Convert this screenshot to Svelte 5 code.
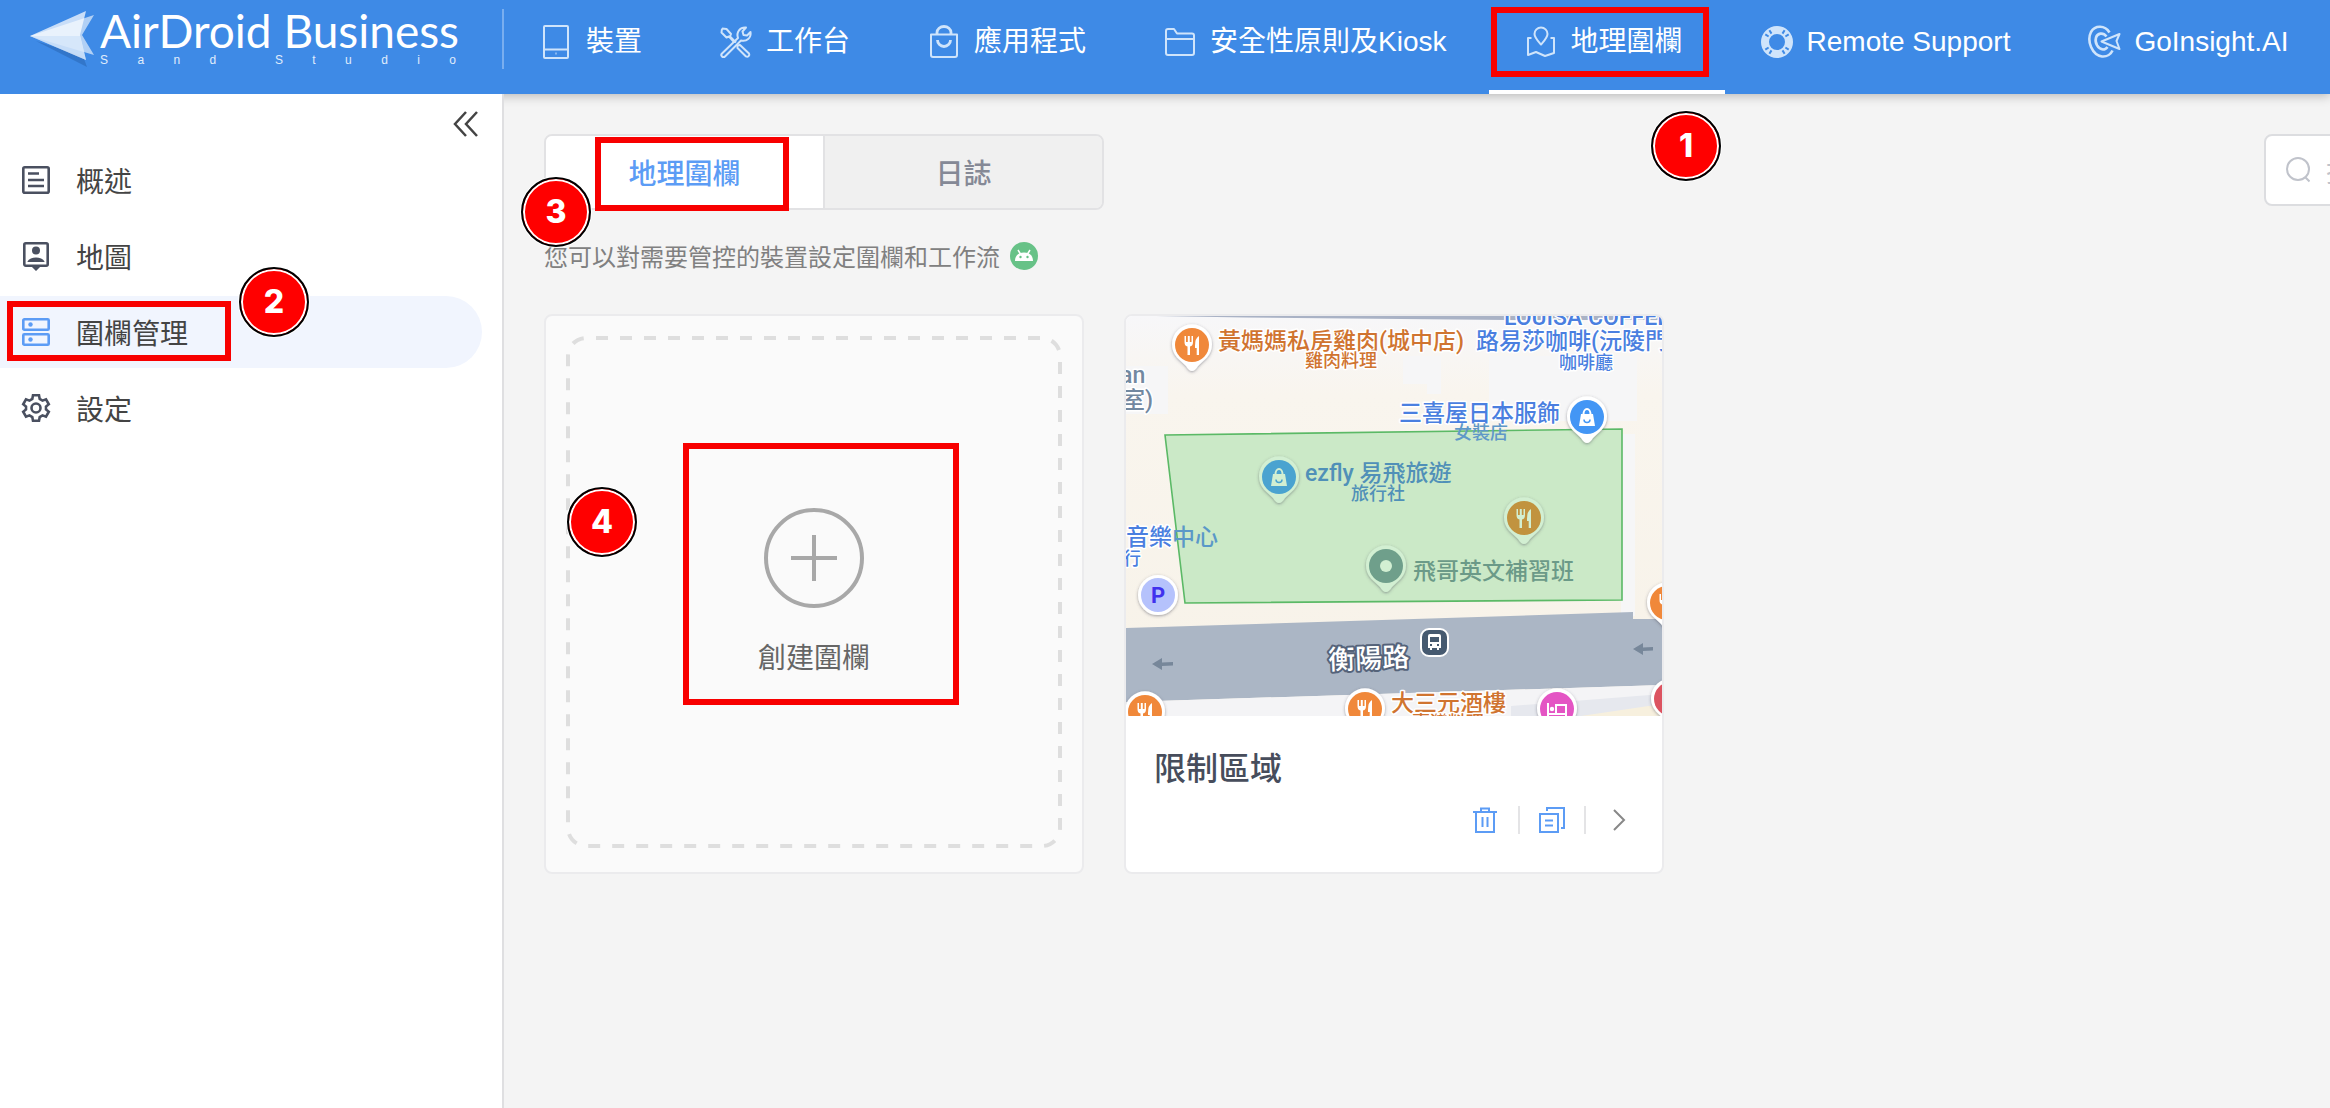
<script lang="ts">
  const navItems = [
    { id: 'devices', label: '裝置' },
    { id: 'workbench', label: '工作台' },
    { id: 'apps', label: '應用程式' },
    { id: 'policy', label: '安全性原則及Kiosk' },
    { id: 'geofence', label: '地理圍欄' },
    { id: 'support', label: 'Remote Support' },
    { id: 'goinsight', label: 'GoInsight.AI' },
  ];

  const sideItems = [
    { id: 'overview', label: '概述' },
    { id: 'map', label: '地圖' },
    { id: 'fences', label: '圍欄管理' },
    { id: 'settings', label: '設定' },
  ];

  const tabs = [
    { id: 'fences', label: '地理圍欄' },
    { id: 'logs', label: '日誌' },
  ];

  // Guide overlay: frames and step numbers that float over the page.
  const frames = [
    { x: 1491, y: 7, w: 218, h: 70 },
    { x: 7, y: 301, w: 224, h: 60 },
    { x: 595, y: 137, w: 194, h: 74 },
    { x: 683, y: 443, w: 276, h: 262 },
  ];
  const steps = [
    { n: 1, x: 1651, y: 111 },
    { n: 2, x: 239, y: 267 },
    { n: 3, x: 521, y: 177 },
    { n: 4, x: 567, y: 487 },
  ];

  // Map pins; x/y is the centre of the round head.
  const pins = [
    { x: 66, y: 29, kind: 'food', fill: '#f0883a', ring: '#fff' },
    { x: 461, y: 101, kind: 'bag', fill: '#4396f5', ring: '#fff' },
    { x: 153, y: 161, kind: 'bag', fill: '#4aa3d0', ring: '#d2efd2' },
    { x: 398, y: 202, kind: 'food', fill: '#c1933f', ring: '#d2efd2' },
    { x: 260, y: 250, kind: 'dot', fill: '#6f9f8b', ring: '#d2efd2' },
    { x: 541, y: 287, kind: 'food', fill: '#f0883a', ring: '#fff' },
    { x: 19, y: 396, kind: 'food', fill: '#f0883a', ring: '#fff' },
    { x: 239, y: 393, kind: 'food', fill: '#f0883a', ring: '#fff' },
    { x: 431, y: 393, kind: 'bed', fill: '#e455c4', ring: '#fff' },
    { x: 545, y: 383, kind: 'dot', fill: '#dc5360', ring: '#fff' },
  ];

  const ORANGE = '#d07430';
  const BLUE = '#4a7fe0';
  const labels = [
    { x: 92, y: 33, size: 23, fill: ORANGE, text: '黃媽媽私房雞肉(城中店)' },
    { x: 179, y: 51, size: 18, fill: ORANGE, text: '雞肉料理' },
    { x: 378, y: 9, size: 23, fill: BLUE, text: 'LOUISA COFFEE' },
    { x: 350, y: 33, size: 23, fill: BLUE, text: '路易莎咖啡(沅陵門市)' },
    { x: 433, y: 53, size: 18, fill: BLUE, text: '咖啡廳' },
    { x: -6, y: 67, size: 23, fill: '#7288a0', text: 'an' },
    { x: -4, y: 92, size: 23, fill: '#7288a0', text: '室)' },
    { x: 273, y: 105, size: 23, fill: BLUE, text: '三喜屋日本服飾' },
    { x: 0, y: 229, size: 23, fill: BLUE, text: '音樂' },
    { x: -3, y: 249, size: 18, fill: BLUE, text: '行' },
    { x: 265, y: 395, size: 23, fill: ORANGE, text: '大三元酒樓' },
    { x: 286, y: 413, size: 18, fill: ORANGE, text: '臺灣料理' },
  ];
  const tintedLabels = [
    { x: 328, y: 123, size: 18, fill: '#5f98c8', text: '女裝店' },
    { x: 179, y: 165, size: 23, fill: '#5090b8', text: 'ezfly 易飛旅遊' },
    { x: 225, y: 184, size: 18, fill: '#5090b8', text: '旅行社' },
    { x: 287, y: 263, size: 23, fill: '#6b9a88', text: '飛哥英文補習班' },
    { x: 46, y: 229, size: 23, fill: '#5a98c8', text: '中心' },
  ];

  let activeNav = $state('geofence');
  let activeSide = $state('fences');
  let activeTab = $state('fences');
  let keyword = $state('');
</script>

{#snippet navIcon(id: string)}
  <svg class="nav-icon" viewBox="0 0 32 32" aria-hidden="true">
    {#if id === 'devices'}
      <rect x="4" y="0" width="24" height="32" rx="1" />
      <path d="M4 23.500H28M15.500 27.500H16.500" />
    {:else if id === 'workbench'}
      <path d="M2 2.500L6.500 3L11 8L10 10.500L16 16.500M2 2.500L1.500 6.500L6.500 11.500L9 10.500L14.500 16.500M17.500 19.500L20 19L29 27.500A2.200 2.200 0 0 1 26 30.500L17.500 22Z" />
      <path d="M2 27.500L18 12C16 6 20 1 26 1.500L22.500 5.500L23.500 9L27 9.500L30.500 6C31.500 12 26.500 16 21 14.500L5 30.500A2.100 2.100 0 0 1 2 27.500Z" />
    {:else if id === 'apps'}
      <path d="M3 8.500H29V29A2 2 0 0 1 27 31H5A2 2 0 0 1 3 29Z" />
      <path d="M9 8V6.500A7 6 0 0 1 23 6.500V8M9.500 14A6.500 6.500 0 0 0 22.500 14" stroke-width="2.800" />
    {:else if id === 'policy'}
      <path d="M2 5A2 2 0 0 1 4 3H10L13 7.500H28A2 2 0 0 1 30 9.500V27A2 2 0 0 1 28 29H4A2 2 0 0 1 2 27ZM2 13H30" />
    {:else if id === 'geofence'}
      <path d="M16 18.500C12.500 14.500 9.500 11.500 9.500 8A6.500 6.500 0 0 1 22.500 8C22.500 11.500 19.500 14.500 16 18.500Z" />
      <path d="M6.500 12H3V29L11 26L20 30L29 27V12H25.500" />
    {:else if id === 'support'}
      <circle cx="16" cy="16" r="12" stroke-width="8" />
      <path
        class="cut"
        d="M21.500 7.600L23.600 4.300M24.400 10.500L27.700 8.400M24.400 21.500L27.700 23.600M21.500 24.400L23.600 27.700M10.500 24.400L8.400 27.700M7.600 21.500L4.300 23.600M7.600 10.500L4.300 8.400M10.500 7.600L8.400 4.300"
      />
    {:else}
      <path d="M21.500 6.500C17 -1 7 -1 3 6C-1.500 15 4 29 14 30.500C19 31 23 28 24.500 24.500" stroke-width="2.600" />
      <path d="M18.500 10.500C15 6 9.500 7 8 11.500C6.500 17 10 23 15 23.500C17 23.500 18.500 22.500 19.500 21" stroke-width="2.600" />
      <path d="M13.500 15.500L31.500 8L28.500 15L31.500 23Z" />
    {/if}
  </svg>
{/snippet}

{#snippet sideIcon(id: string)}
  <svg class="side-icon" viewBox="0 0 28 28" aria-hidden="true">
    {#if id === 'overview'}
      <rect x="1.300" y="1.300" width="25.400" height="25.400" rx="1.500" />
      <path d="M6 7.500H17M6 14H22M6 20H22" />
    {:else if id === 'map'}
      <rect x="2.300" y="1.300" width="23.400" height="22.400" rx="1.500" />
      <circle cx="14" cy="8.500" r="4" class="solid" />
      <path d="M5.500 19.500C8 14 20 14 22.500 19.500V20H5.500ZM9.500 24.500H18.500L14 29Z" class="solid" />
    {:else if id === 'fences'}
      <rect x="1.300" y="1.300" width="25.400" height="10.400" rx="1" />
      <rect x="1.300" y="16.300" width="25.400" height="10.400" rx="1" />
      <circle cx="8.500" cy="6.500" r="2.200" class="solid" />
      <circle cx="8.500" cy="21.500" r="2.200" class="solid" />
    {:else}
      <path d="M11 1.300H17L17.700 5L20.500 6.600L24 5.300L26.800 10.300L24 12.600V15.400L26.800 17.700L24 22.700L20.500 21.400L17.700 23L17 26.700H11L10.300 23L7.500 21.400L4 22.700L1.200 17.700L4 15.400V12.600L1.200 10.300L4 5.300L7.500 6.600L10.300 5Z" />
      <circle cx="14" cy="14" r="4.500" />
    {/if}
  </svg>
{/snippet}

<div class="app">
  <header class="topbar">
    <a class="logo" href="#home">
      <svg class="logo-mark" viewBox="0 0 64 58" aria-hidden="true">
        <path d="M6 31L57 57L53 46Z" fill="#2b69b8" opacity=".6" />
        <path d="M0 26L64 5L52 25L64 45Z" fill="#fff" opacity=".6" />
        <path d="M0 26L56 1L50 25L56 50Z" fill="#fff" opacity=".72" />
        <path d="M0 26H50L56 50Z" fill="#c4dcf7" opacity=".5" />
      </svg>
      <span class="logo-text">
        <span class="brand">AirDroid Business</span>
        <span class="studio">
          {#each 'Sand Studio' as letter}<span>{letter}</span>{/each}
        </span>
      </span>
    </a>
    <nav class="nav">
      {#each navItems as item}
        <a
          href="#{item.id}"
          class="nav-item"
          class:active={activeNav === item.id}
          onclick={() => (activeNav = item.id)}
        >
          {@render navIcon(item.id)}
          {item.label}
        </a>
      {/each}
    </nav>
  </header>

  <div class="body">
    <aside class="sidebar">
      <button class="collapse" aria-label="收合">
        <svg viewBox="0 0 26 26" aria-hidden="true"><path d="M13 1L2 13L13 25M24 1L13 13L24 25" /></svg>
      </button>
      {#each sideItems as item}
        <a
          href="#{item.id}"
          class="side-item"
          class:active={activeSide === item.id}
          onclick={() => (activeSide = item.id)}
        >
          {@render sideIcon(item.id)}
          {item.label}
        </a>
      {/each}
    </aside>

    <main class="content">
      <div class="toolbar">
        <div class="tabs" role="tablist">
          {#each tabs as tab}
            <button
              role="tab"
              class="tab"
              class:active={activeTab === tab.id}
              aria-selected={activeTab === tab.id}
              onclick={() => (activeTab = tab.id)}
            >{tab.label}</button>
          {/each}
        </div>
        <label class="search">
          <svg viewBox="0 0 24 26" aria-hidden="true"><circle cx="12" cy="12" r="11" /><path d="M19 20L23.500 24.500" /></svg>
          <input type="text" placeholder="搜尋" aria-label="搜尋" bind:value={keyword} />
        </label>
      </div>

      <p class="hint">
        您可以對需要管控的裝置設定圍欄和工作流
        <svg viewBox="0 0 28 28" aria-hidden="true">
          <circle cx="14" cy="14" r="14" fill="#67c287" />
          <path d="M5 19C5 13 9 10.500 14 10.500S23 13 23 19Z" fill="#fff" />
          <path d="M8 8L10.500 12M20 8L17.500 12" stroke="#fff" stroke-width="1.500" />
          <circle cx="10.500" cy="15" r="1.200" fill="#67c287" />
          <circle cx="17.500" cy="15" r="1.200" fill="#67c287" />
        </svg>
      </p>

      <div class="cards">
        <button class="card create">
          <svg class="dashes" aria-hidden="true"><rect x="2" y="2" rx="18" /></svg>
          <span class="create-body">
            <svg class="plus" viewBox="0 0 100 100" aria-hidden="true">
              <circle cx="50" cy="50" r="48" />
              <path d="M50 27V73M27 50H73" />
            </svg>
            創建圍欄
          </span>
        </button>

        <article class="card fence">
          <svg class="map" viewBox="0 0 536 400" role="img" aria-label="限制區域">
            <defs>
              <linearGradient id="ground" x1="0" y1="0" x2="0" y2="1">
                <stop offset="0" stop-color="#f7f7f9" />
                <stop offset=".2" stop-color="#f9f5ee" />
                <stop offset="1" stop-color="#f7f2e8" />
              </linearGradient>
              <filter id="pinShadow" x="-20%" y="-20%" width="140%" height="150%">
                <feDropShadow dx="0" dy="1" stdDeviation="1.500" flood-color="#445" flood-opacity=".5" />
              </filter>
            </defs>
            <rect width="536" height="400" fill="url(#ground)" />
            <path d="M0 50H42V98H0ZM277 40H315V78H301V68H277ZM363 40H511V105H363ZM495 118H509V300H495Z" fill="#f6f6f7" />
            <path d="M30 0H536V4H380L120 1.500Z" fill="#a9b2c5" />
            <path d="M0 312L507 296V303H536V369L0 386Z" fill="#abb6c5" />
            <path d="M0 386L536 369V400H0Z" fill="#f4f4f6" />
            <path d="M385 390L536 378V400H385Z" fill="#e6e8ee" />
            <path d="M455 400L536 388V400Z" fill="#f7f0de" />
            <path d="M26 348L36 342V346.500L47 346V349.500L36 350V354ZM507 333L517 327V331.500L527 331V334.500L517 335V339Z" fill="#77879a" />

            {#each labels as l}
              <text x={l.x} y={l.y} font-size={l.size} fill={l.fill} class="halo">{l.text}</text>
            {/each}

            <path d="M39 119L496 113V284L59 287Z" fill="#c9e8c5" fill-opacity=".96" stroke="#5bb966" stroke-width="1.600" />

            {#each tintedLabels as l}
              <text x={l.x} y={l.y} font-size={l.size} fill={l.fill}>{l.text}</text>
            {/each}

            <text x="202" y="352" font-size="27" class="road" transform="rotate(-2 243 341)">衡陽路</text>
            <rect x="295" y="313" width="27" height="27" rx="8" fill="#465a70" stroke="#fff" stroke-width="2" />
            <path d="M302 320Q302 318 304 318H313Q315 318 315 320V332H313V334H311V332H306V334H304V332H302Z" fill="#fff" />
            <path d="M304 321H313V326H304ZM304 328H306V330H304ZM311 328H313V330H311Z" fill="#465a70" />

            <circle cx="32" cy="279" r="18.500" fill="#b5c2fc" stroke="#fff" stroke-width="3" filter="url(#pinShadow)" />
            <text x="25" y="287" font-size="22" class="parking">P</text>

            {#each pins as p}
              <g transform="translate({p.x} {p.y})">
                <path d="M0 26Q-3 26 -6 21L-15 12.500A20 20 0 1 1 15 12.500L6 21Q3 26 0 26Z" fill={p.ring} filter="url(#pinShadow)" />
                <circle r="17" fill={p.fill} />
                {#if p.kind === 'food'}
                  <path d="M-7.500 -9V-3Q-7.500 1 -4.500 1.500V10H-2V1.500Q1 1 1 -3V-9H-.500V-3H-2.200V-9H-4.200V-3H-6V-9ZM7 -9Q3 -7 3 1V3H4.700V10H7Z" fill={p.ring} />
                {:else if p.kind === 'bag'}
                  <path d="M-6 -3H6L8 9H-8Z" fill={p.ring} />
                  <path d="M-3.500 -3A3.500 5 0 0 1 3.500 -3" fill="none" stroke={p.ring} stroke-width="2" />
                  <path d="M-3 2.500A3 3 0 0 0 3 2.500" fill="none" stroke={p.fill} stroke-width="1.500" />
                {:else if p.kind === 'bed'}
                  <path d="M-9 -6V9M-9 5H9M9 9V-4H-1V5" fill="none" stroke="#fff" stroke-width="2" />
                  <circle cx="-5" cy="0" r="2.200" fill="#fff" />
                {:else}
                  <circle r="6" fill={p.ring} />
                {/if}
              </g>
            {/each}
          </svg>

          <h2 class="fence-name">限制區域</h2>
          <div class="actions">
            <button aria-label="刪除">
              <svg viewBox="0 0 26 26" aria-hidden="true"><path d="M1 5H25M9 5V1.500H17V5M4 5V25H22V5M10.500 10V20M15.500 10V20" /></svg>
            </button>
            <button aria-label="複製">
              <svg viewBox="0 0 26 26" aria-hidden="true"><path d="M1 7H19V25H1ZM8 4V1H25V21H22M6 13.500H14M6 18.500H14" /></svg>
            </button>
            <button class="more" aria-label="詳情">
              <svg viewBox="0 0 26 26" aria-hidden="true"><path d="M9 3L19 13L9 23" /></svg>
            </button>
          </div>
        </article>
      </div>
    </main>
  </div>

  <div class="guide">
    {#each frames as f}
      <div class="frame" style="left: {f.x}px; top: {f.y}px; width: {f.w}px; height: {f.h}px"></div>
    {/each}
    {#each steps as s}
      <span class="step" style="left: {s.x}px; top: {s.y}px">{s.n}</span>
    {/each}
  </div>
</div>

<style>
  :global(body) {
    margin: 0;
    background: #f4f4f4;
  }
  .app {
    position: relative;
    display: flex;
    flex-direction: column;
    min-height: 100vh;
    overflow: hidden;
    font-family: 'Noto Sans CJK TC', sans-serif;
    font-size: 28px;
    line-height: 40px;
    color: #444;
  }
  .app *,
  .app {
    box-sizing: border-box;
  }
  a {
    color: inherit;
    text-decoration: none;
  }
  button {
    padding: 0;
    border: 0;
    background: none;
    font: inherit;
    color: inherit;
    cursor: pointer;
  }
  svg {
    display: block;
    flex: none;
  }

  /* top bar */
  .topbar {
    position: relative;
    z-index: 1;
    display: flex;
    height: 94px;
    background: #3e8ae6;
    color: #fff;
    box-shadow: 0 2px 10px rgba(0, 0, 0, 0.25);
    font-family: 'Liberation Sans', 'Noto Sans CJK TC', sans-serif;
  }
  .logo {
    display: flex;
    align-items: flex-start;
    gap: 6px;
    width: 504px;
    height: 60px;
    margin-top: 9px;
    padding-left: 30px;
    border-right: 2px solid #79aeef;
    flex: none;
  }
  .logo-mark {
    width: 64px;
    height: 58px;
    margin-top: 1px;
  }
  .logo-text {
    display: flex;
    flex-direction: column;
    width: 356px;
  }
  .brand {
    font-family: Lato, sans-serif;
    font-size: 46px;
    line-height: 44px;
    white-space: nowrap;
  }
  .studio {
    display: flex;
    justify-content: space-between;
    font-size: 12px;
    line-height: 14px;
    color: #e0edfc;
  }
  .nav {
    display: flex;
  }
  .nav-item {
    display: flex;
    align-items: center;
    gap: 14px;
    padding: 0 42px 10px 36px;
    white-space: nowrap;
  }
  .nav-item.active {
    box-shadow: inset 0 -4px #fff;
  }
  .nav-icon {
    width: 32px;
    height: 32px;
    fill: none;
    stroke: #cfe4fb;
    stroke-width: 2;
    stroke-linejoin: round;
    overflow: visible;
  }
  .nav-icon .cut {
    stroke: #3e8ae6;
  }

  /* sidebar */
  .body {
    display: flex;
    flex: 1;
  }
  .sidebar {
    position: relative;
    z-index: 2;
    display: flex;
    flex-direction: column;
    gap: 4px;
    width: 504px;
    padding: 16px 20px 0 0;
    border-right: 2px solid #dfdfe1;
    background: #fff;
    flex: none;
  }
  .collapse {
    align-self: flex-end;
    width: 26px;
    height: 26px;
    margin: 1px 3px 3px 0;
  }
  .collapse svg {
    fill: none;
    stroke: #444;
    stroke-width: 2.5;
  }
  .side-item {
    display: flex;
    align-items: center;
    gap: 26px;
    height: 72px;
    padding-left: 22px;
    border-radius: 0 36px 36px 0;
  }
  .side-item.active {
    background: #f1f5fe;
  }
  .side-icon {
    width: 28px;
    height: 28px;
    fill: none;
    stroke: #4a5060;
    stroke-width: 2.6;
    overflow: visible;
  }
  .side-icon .solid {
    fill: #4a5060;
    stroke: none;
  }
  .side-item.active .side-icon {
    stroke: #5c9cf5;
  }
  .side-item.active .solid {
    fill: #5c9cf5;
  }

  /* content */
  .content {
    flex: 1;
    min-width: 0;
    padding: 40px;
  }
  .toolbar {
    display: flex;
    justify-content: space-between;
    align-items: flex-start;
    /* the search box runs past the right edge of the viewport */
    margin-right: -274px;
  }
  .tabs {
    display: flex;
    width: 560px;
    height: 76px;
    border: 2px solid #e2e2e4;
    border-radius: 8px;
    overflow: hidden;
  }
  .tab {
    flex: 1;
    background: #f0f0f0;
    color: #858996;
    font-weight: 500;
  }
  .tab + .tab {
    border-left: 2px solid #e2e2e4;
  }
  .tab.active {
    background: #fff;
    color: #5c9cf5;
  }
  .search {
    display: flex;
    align-items: center;
    gap: 16px;
    width: 300px;
    height: 72px;
    padding: 0 20px;
    border: 2px solid #dcdde0;
    border-radius: 8px;
    background: #fff;
  }
  .search svg {
    width: 24px;
    height: 26px;
    fill: none;
    stroke: #c0c3cb;
    stroke-width: 2;
  }
  .search input {
    width: 100%;
    padding: 0;
    border: 0;
    outline: 0;
    background: none;
    font: inherit;
  }
  .search input::placeholder {
    color: #c0c3cb;
  }
  .hint {
    display: flex;
    align-items: center;
    gap: 10px;
    margin: 28px 0;
    font-size: 24px;
    line-height: 36px;
    color: #808080;
  }
  .hint svg {
    width: 28px;
    height: 28px;
  }
  .cards {
    display: grid;
    grid-template-columns: repeat(auto-fill, 540px);
    gap: 40px;
    margin-top: 40px;
  }
  .card {
    border: 2px solid #ebebed;
    border-radius: 8px;
    background: #fff;
    overflow: hidden;
  }
  .create {
    display: grid;
    padding: 20px 20px 24px;
    background: #fafafa;
    color: #666;
  }
  .dashes,
  .create-body {
    grid-area: 1 / 1;
  }
  .dashes {
    width: 100%;
    height: 100%;
  }
  .dashes rect {
    width: calc(100% - 4px);
    height: calc(100% - 4px);
    fill: none;
    stroke: #dedede;
    stroke-width: 4;
    stroke-dasharray: 12 12;
    stroke-dashoffset: -10;
  }
  .create-body {
    display: flex;
    flex-direction: column;
    align-items: center;
    align-self: center;
    gap: 28px;
  }
  .plus {
    width: 100px;
    height: 100px;
    fill: none;
    stroke: #a8a8a8;
    stroke-width: 4;
  }
  .map {
    width: 100%;
    height: auto;
    font-family: Roboto, 'Noto Sans CJK TC', sans-serif;
    font-weight: 500;
  }
  .halo {
    paint-order: stroke;
    stroke: #fff;
    stroke-width: 3;
    stroke-linejoin: round;
  }
  .road {
    fill: #fff;
    paint-order: stroke;
    stroke: #55637a;
    stroke-width: 4;
    stroke-linejoin: round;
  }
  .parking {
    fill: #3f31ee;
    font-weight: 700;
  }
  .fence-name {
    margin: 30px 28px 20px;
    font-size: 32px;
    line-height: 40px;
    font-weight: 500;
    color: #474d5c;
  }
  .actions {
    display: flex;
    justify-content: flex-end;
    margin: 0 12px 38px 0;
  }
  .actions button {
    display: grid;
    place-items: center;
    width: 66px;
    height: 28px;
  }
  .actions button + button {
    border-left: 2px solid #e4e4e6;
  }
  .actions svg {
    width: 26px;
    height: 26px;
    fill: none;
    stroke: #5c9cf5;
    stroke-width: 2;
  }
  .actions .more svg {
    stroke: #888;
  }

  /* guide overlay */
  .guide {
    position: absolute;
    inset: 0;
    z-index: 3;
    pointer-events: none;
  }
  .frame {
    position: absolute;
    border: 6px solid #f80000;
  }
  .step {
    position: absolute;
    width: 70px;
    height: 70px;
    border: 2px solid #000;
    border-radius: 50%;
    background: #f00;
    box-shadow: inset 0 0 0 2px #fff, 0 0 0 1px #fff;
    font: 800 32px/66px Inter, sans-serif;
    text-align: center;
    color: #fff;
  }
</style>
